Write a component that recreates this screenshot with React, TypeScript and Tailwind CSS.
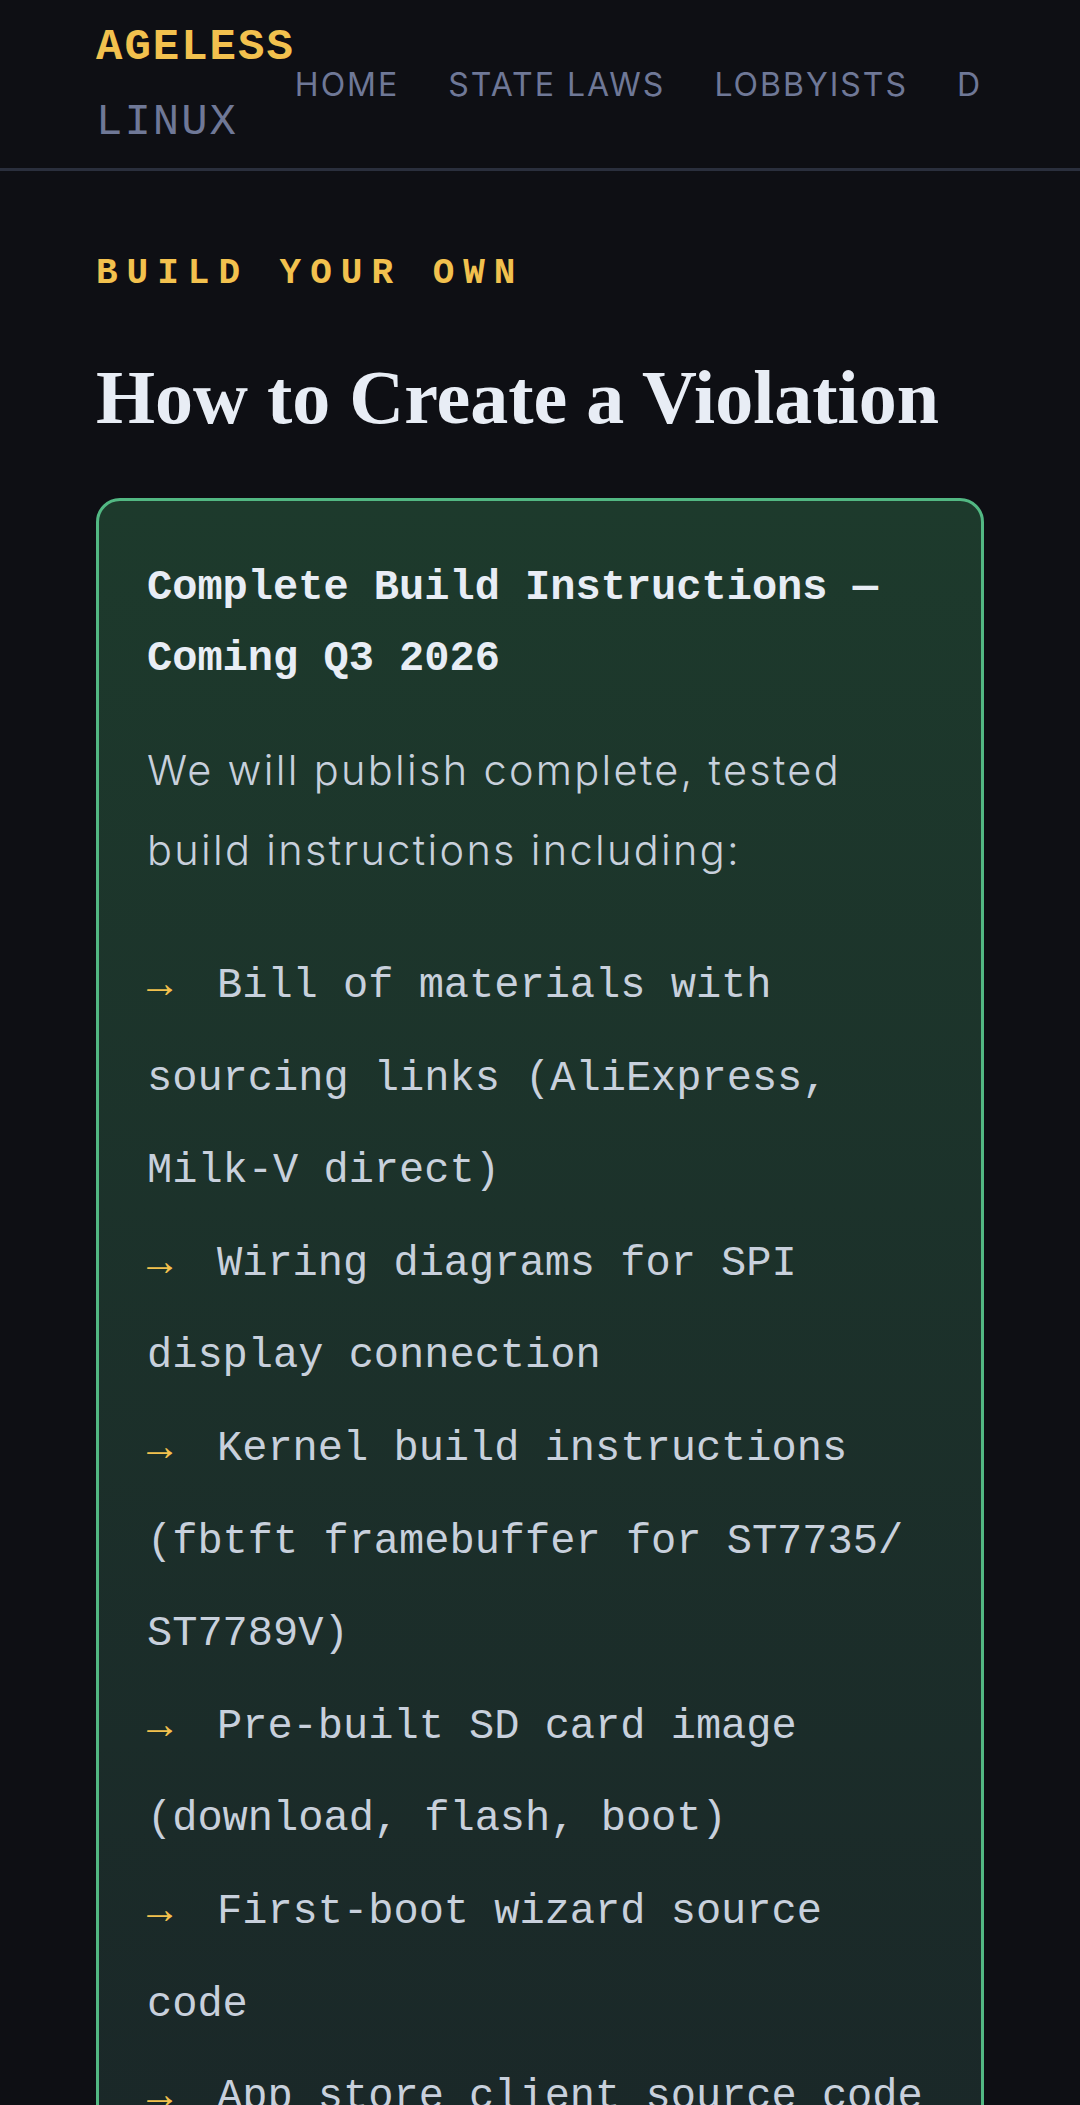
// Ageless Linux — build page
const mono = { fontFamily: '"Liberation Mono", "DejaVu Sans Mono", monospace' };

const navLinks = ['Home', 'State Laws', 'Lobbyists', 'Devices', 'Donate'];

const buildItems = [
  <>Bill of materials with sourcing links (AliExpress, Milk-V direct)</>,
  <>Wiring diagrams for SPI display connection</>,
  <>
    Kernel build instructions (fbtft framebuffer for ST7735/
    <wbr />
    ST7789V)
  </>,
  <>Pre-built SD card image (download, flash, boot)</>,
  <>First-boot wizard source code</>,
  <>App store client source code</>,
];

function Header() {
  return (
    <header className="border-b-[3px] border-[#2a2f3d]">
      <div className="mx-[96px] flex items-center pt-[10px] pb-[8px]">
        <a className="block w-min shrink-0 font-['Liberation_Mono'] text-[44px] leading-[75px] tracking-[2px]">
          <span className="block font-bold text-[#f2c14e]">AGELESS</span>
          <span className="block text-[#6f7897]">LINUX</span>
        </a>
        <nav className="flex min-w-0 flex-1 gap-[49px] overflow-hidden whitespace-nowrap font-['Inter'] text-[32px] uppercase tracking-[2px] text-[#6f7897]">
          {navLinks.map((l) => (
            <a key={l} className="shrink-0">
              {l}
            </a>
          ))}
        </nav>
      </div>
    </header>
  );
}

function BuildCard() {
  return (
    <div className="rounded-[24px] border-[3px] border-[#52b883] bg-gradient-to-b from-[#1d3a2c] to-[#1a2728] p-[48px]">
      <h3 className="mt-[4px] mb-[35px] text-[42px] font-bold leading-[71px] text-[#e8edf5]" style={mono}>
        Complete Build Instructions — Coming Q3 2026
      </h3>
      <p className="font-['Inter'] text-[41.5px] font-light leading-[80px] tracking-[2.3px] text-[#c8d0dc]">
        We will publish complete, tested build instructions including:
      </p>
      <ul className="mt-[50px] text-[42px] leading-[92.6px] text-[#c8d0dc]" style={mono}>
        {buildItems.map((item, i) => (
          <li key={i}>
            <span className="inline-block w-[70px] text-[#f2c14e]">→</span>
            {item}
          </li>
        ))}
      </ul>
    </div>
  );
}

export default function App() {
  return (
    <div className="min-h-screen bg-[#0e0f14]">
      <Header />
      <main className="mx-[96px] pt-[76px]">
        <div
          className="text-[36px] font-semibold uppercase leading-[54px] tracking-[9px] text-[#f2c14e]"
          style={mono}
        >
          Build Your Own
        </div>
        <h1 className="mt-[51px] mb-[55px] font-['Liberation_Serif'] text-[76px] font-bold leading-[91px] text-[#e8edf5]">
          How to Create a Violation
        </h1>
        <BuildCard />
      </main>
    </div>
  );
}
